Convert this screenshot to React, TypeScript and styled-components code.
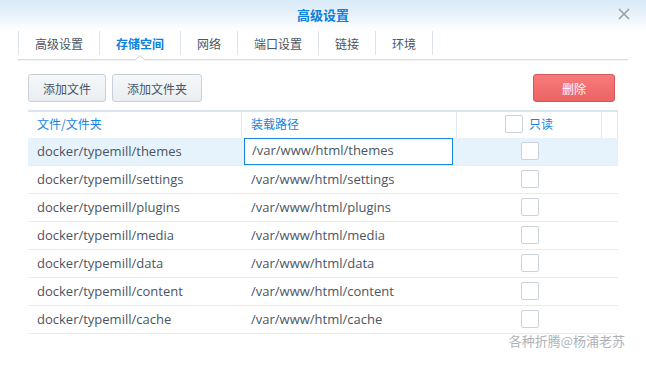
import React from "react";
import styled, { createGlobalStyle } from "styled-components";

const Global = createGlobalStyle`
  html, body { margin: 0; padding: 0; background: #ffffff; }
  body { font-family: "Open Sans", "Noto Sans CJK SC", sans-serif; color: #4b5562; }
  * { box-sizing: border-box; }
`;

const Window = styled.div`
  width: 646px;
  height: 368px;
  background: #fff;
  display: flex;
  flex-direction: column;
  overflow: hidden;
`;

const TitleBar = styled.div`
  height: 31px;
  background: linear-gradient(to bottom, #d8e9f8 0%, #eaf3fb 50%, #ffffff 100%);
  display: grid;
  grid-template-columns: 1fr auto 1fr;
  align-items: center;
  padding-bottom: 3px;
`;

const Title = styled.div`
  grid-column: 2;
  font-size: 13px;
  font-weight: bold;
  color: #0b80dc;
  font-family: "Noto Sans CJK SC", sans-serif;
`;

const CloseButton = styled.div`
  grid-column: 3;
  justify-self: end;
  margin-right: 16px;
  width: 12px;
  height: 12px;
  display: flex;
`;

const TabBar = styled.div`
  display: flex;
  margin: 0 18px;
  height: 24px;
`;

const Tab = styled.div<{ $active?: boolean }>`
  position: relative;
  display: flex;
  align-items: center;
  padding: 0 16px;
  border-left: 1px solid #dde3ea;
  font-size: 12px;
  font-family: "Noto Sans CJK SC", sans-serif;
  color: ${(p) => (p.$active ? "#0b80dc" : "#4b5562")};
  font-weight: ${(p) => (p.$active ? "bold" : "normal")};
  &:last-child { border-right: 1px solid #dde3ea; }
`;

const Caret = styled.svg`
  position: absolute;
  left: 50%;
  top: 100%;
  margin-left: -7px;
  width: 14px;
  height: 6px;
  z-index: 2;
`;

const TabRule = styled.div`
  margin: 4px 18px 0;
  height: 1px;
  background: #d9dde1;
  box-shadow: 0 1px 1px rgba(0, 0, 0, 0.06);
`;

const Content = styled.div`
  padding: 14px 28px 0;
  display: flex;
  flex-direction: column;
`;

const Toolbar = styled.div`
  display: flex;
  gap: 6px;
  padding-right: 3px;
`;

const Button = styled.button`
  height: 28px;
  padding: 0 14px;
  border: 1px solid #c6d0da;
  border-radius: 3px;
  background: linear-gradient(to bottom, #f6f8fa, #e9eef2);
  font-family: "Noto Sans CJK SC", sans-serif;
  font-size: 12px;
  color: #4b5562;
`;

const DangerButton = styled(Button)`
  margin-left: auto;
  width: 82px;
  border-color: #d65858;
  background: linear-gradient(to bottom, #f87a7a, #ec6464);
  color: #fff;
`;

const Table = styled.div`
  margin-top: 8px;
  display: grid;
  grid-template-columns: 214px 215px 145px 16px;
  border-top: 2px solid #dbe5ef;
`;

const HeadCell = styled.div<{ $center?: boolean }>`
  height: 26px;
  display: flex;
  align-items: center;
  justify-content: ${(p) => (p.$center ? "center" : "flex-start")};
  gap: 6px;
  padding-left: ${(p) => (p.$center ? "0" : "9px")};
  padding-bottom: 3px;
  font-family: "Noto Sans CJK SC", sans-serif;
  font-size: 12px;
  color: #1384e2;
  border-right: 1px solid #e2e9f0;
  &:last-child { border-right: none; }
`;

const Row = styled.div<{ $selected?: boolean }>`
  display: contents;
  & > div {
    background: ${(p) => (p.$selected ? "#e6f3fd" : "#fff")};
  }
`;

const Cell = styled.div<{ $center?: boolean }>`
  height: 28px;
  border-bottom: 1px solid #e9ecef;
  display: flex;
  align-items: center;
  justify-content: ${(p) => (p.$center ? "center" : "flex-start")};
  padding-left: ${(p) => (p.$center ? "0" : "9px")};
  padding-bottom: 2px;
  font-size: 13px;
  color: #4b5562;
  white-space: nowrap;
`;

const EditCell = styled(Cell)`
  padding: 0 4px 1px 2px;
`;

const PathInput = styled.div`
  width: 100%;
  height: 27px;
  border: 1px solid #1a86e3;
  background: #fff;
  display: flex;
  align-items: center;
  padding-left: 7px;
  padding-bottom: 2px;
  font-size: 13px;
  color: #4b5562;
`;

const Check = styled.div`
  width: 18px;
  height: 18px;
  border: 1px solid #c9d3dd;
  border-radius: 2px;
  background: #fff;
`;

const Watermark = styled.div`
  align-self: flex-end;
  margin-right: -7px;
  margin-top: -1px;
  font-family: "Noto Sans CJK SC", sans-serif;
  font-size: 13px;
  line-height: 16px;
  color: #aeb2b6;
`;

const rows = [
  ["docker/typemill/themes", "/var/www/html/themes"],
  ["docker/typemill/settings", "/var/www/html/settings"],
  ["docker/typemill/plugins", "/var/www/html/plugins"],
  ["docker/typemill/media", "/var/www/html/media"],
  ["docker/typemill/data", "/var/www/html/data"],
  ["docker/typemill/content", "/var/www/html/content"],
  ["docker/typemill/cache", "/var/www/html/cache"],
];

const tabs = ["高级设置", "存储空间", "网络", "端口设置", "链接", "环境"];

export default function App() {
  return (
    <>
      <Global />
      <Window>
        <TitleBar>
          <Title>高级设置</Title>
          <CloseButton>
            <svg width="12" height="12" viewBox="0 0 12 12">
              <path d="M1 1 L11 11 M11 1 L1 11" stroke="#9ba2a9" strokeWidth="1.7" fill="none" />
            </svg>
          </CloseButton>
        </TitleBar>
        <TabBar>
          {tabs.map((t, i) => (
            <Tab key={t} $active={i === 1}>
              {t}
              {i === 1 && (
                <Caret viewBox="0 0 14 6">
                  <path d="M0 6 L7 0.5 L14 6 Z" fill="#fff" />
                  <path d="M0.5 6 L7 0.7 L13.5 6" stroke="#cfd4d8" strokeWidth="1" fill="none" />
                </Caret>
              )}
            </Tab>
          ))}
        </TabBar>
        <TabRule />
        <Content>
          <Toolbar>
            <Button>添加文件</Button>
            <Button>添加文件夹</Button>
            <DangerButton>删除</DangerButton>
          </Toolbar>
          <Table>
            <HeadCell>文件/文件夹</HeadCell>
            <HeadCell>装载路径</HeadCell>
            <HeadCell $center>
              <Check />
              只读
            </HeadCell>
            <HeadCell />
            {rows.map(([a, b], i) => (
              <Row key={a} $selected={i === 0}>
                <Cell>{a}</Cell>
                {i === 0 ? (
                  <EditCell>
                    <PathInput>{b}</PathInput>
                  </EditCell>
                ) : (
                  <Cell>{b}</Cell>
                )}
                <Cell $center>
                  <Check />
                </Cell>
                <Cell />
              </Row>
            ))}
          </Table>
          <Watermark>各种折腾@杨浦老苏</Watermark>
        </Content>
      </Window>
    </>
  );
}
